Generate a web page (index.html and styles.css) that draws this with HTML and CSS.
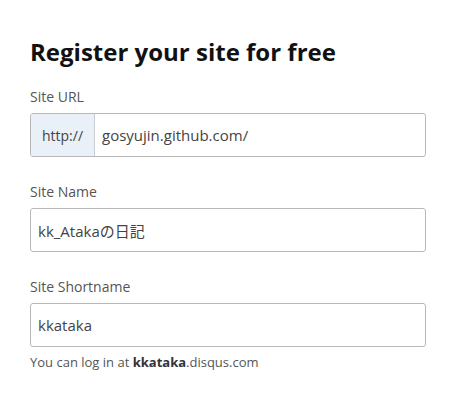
FILE: index.html
```html
<!DOCTYPE html>
<html>
<head>
<meta charset="utf-8">
<link rel="stylesheet" href="styles.css">
</head>
<body>
<main class="page">
  <h1 class="title">Register your site for free</h1>
  <div class="field">
    <label class="label">Site URL</label>
    <div class="input input-group">
      <span class="prefix">http://</span>
      <span class="value">gosyujin.github.com/</span>
    </div>
  </div>
  <div class="field">
    <label class="label">Site Name</label>
    <div class="input"><span class="value">kk_Atakaの日記</span></div>
  </div>
  <div class="field">
    <label class="label">Site Shortname</label>
    <div class="input"><span class="value">kkataka</span></div>
    <p class="help">You can log in at <strong>kkataka</strong>.disqus.com</p>
  </div>
</main>
</body>
</html>
```
FILE: styles.css
```css
* { box-sizing: border-box; }
html, body { margin: 0; background: #fff; }
body { font-family: "Open Sans", "Noto Sans CJK JP", sans-serif; color: #333; }
.page { padding: 37px 37px 0 30px; display: flex; flex-direction: column; gap: 25px; }
.title { margin: 0 0 -5px; font-size: 24px; line-height: 30px; font-weight: 700; color: #111; letter-spacing: 0; }
.field { display: flex; flex-direction: column; }
.label { font-size: 14px; line-height: 20px; color: #555; margin-bottom: 6px; }
.input { height: 44px; border: 1px solid #b8b8b8; border-radius: 3px; display: flex; align-items: center; padding-left: 7px; font-size: 15px; color: #444; background: #fff; }
.input-group { padding-left: 0; overflow: hidden; }
.prefix { align-self: stretch; display: flex; align-items: center; width: 64px; justify-content: center; background: #e9f0f7; border-right: 1px solid #c8ced4; color: #444; font-size: 14px; }
.input-group .value { padding-left: 7px; }
.help { margin: 6px 0 0; font-size: 13px; color: #555; line-height: 18px; }
.help strong { color: #333; }
```
